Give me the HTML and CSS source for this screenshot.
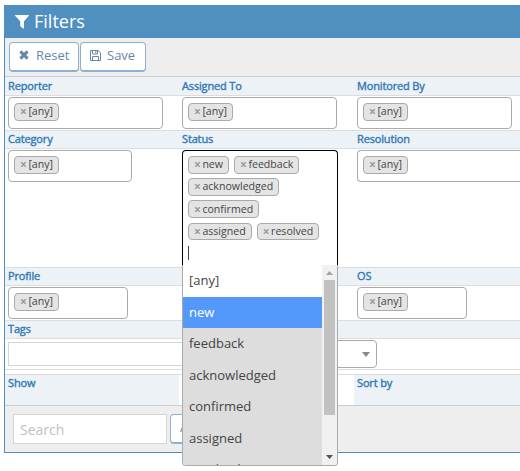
FILE: index.html
```html
<!DOCTYPE html>
<html lang="en">
<head>
<meta charset="utf-8">
<title>Filters</title>
<link rel="stylesheet" href="styles.css">
</head>
<body>
<section class="widget">
  <header class="widget-header">
    <svg class="funnel" viewBox="0 0 14 14"><path d="M0.3 0h13.4q.5.6 0 1.100L9 6.300V13.200q-.3.700-.9.200L5.200 11V6.300L.3 1.100Q-.2.500.3 0z"/></svg>
    <h4>Filters</h4>
  </header>
  <div class="toolbar">
    <a class="btn reset"><svg class="times" viewBox="0 0 10 10"><path d="M2.400.3 5 2.800 7.600.3 9.700 2.400 7.200 5 9.700 7.600 7.600 9.700 5 7.200 2.400 9.700.3 7.600 2.800 5 .3 2.400z"/></svg>Reset</a>
    <a class="btn save"><svg class="floppy" viewBox="0 0 11 11"><path d="M.5.500h7.700l2.300 2.300v7.700H.5zM2.500.500v3.500h5V.500M5.800 1v2.200M2.500 10.500v-4h6v4"/></svg>Save</a>
  </div>
  <div class="row labels"><div>Reporter</div><div>Assigned To</div><div>Monitored By</div></div>
  <div class="row fields">
    <div><div class="select w155"><span class="chip"><i>×</i>[any]</span></div></div>
    <div><div class="select w155"><span class="chip"><i>×</i>[any]</span></div></div>
    <div><div class="select w155"><span class="chip"><i>×</i>[any]</span></div></div>
  </div>
  <div class="row labels alt"><div>Category</div><div>Status</div><div>Resolution</div></div>
  <div class="row fields tall">
    <div><div class="select w124"><span class="chip"><i>×</i>[any]</span></div></div>
    <div class="status-cell">
      <div class="select open">
        <div class="chips"><span class="chip"><i>×</i>new</span><span class="chip"><i>×</i>feedback</span></div>
        <div class="chips"><span class="chip"><i>×</i>acknowledged</span></div>
        <div class="chips"><span class="chip"><i>×</i>confirmed</span></div>
        <div class="chips"><span class="chip"><i>×</i>assigned</span><span class="chip"><i>×</i>resolved</span></div>
        <span class="caret"></span>
      </div>
      <div class="dropdown">
        <ul class="options">
          <li class="any">[any]</li>
          <li class="active">new</li>
          <li>feedback</li>
          <li>acknowledged</li>
          <li>confirmed</li>
          <li>assigned</li>
          <li>resolved</li>
        </ul>
        <div class="scrollbar">
          <svg class="arrow up" viewBox="0 0 7 4"><path d="M0 4 3.500 0 7 4z"/></svg>
          <div class="thumb"></div>
          <svg class="arrow down" viewBox="0 0 7 4"><path d="M0 0h7L3.500 4z"/></svg>
        </div>
      </div>
    </div>
    <div><div class="select w200"><span class="chip"><i>×</i>[any]</span></div></div>
  </div>
  <div class="row labels alt"><div>Profile</div><div></div><div>OS</div></div>
  <div class="row fields">
    <div><div class="select w120"><span class="chip"><i>×</i>[any]</span></div></div>
    <div></div>
    <div><div class="select w110"><span class="chip"><i>×</i>[any]</span></div></div>
  </div>
  <div class="row labels alt"><div>Tags</div><div></div><div></div></div>
  <div class="tags">
    <div class="tag-input"></div>
    <div class="tag-select"><svg viewBox="0 0 8 5"><path d="M0 0h8L4 5z"/></svg></div>
  </div>
  <div class="row summary"><div>Show</div><div class="blank"></div><div>Sort by</div></div>
  <footer class="widget-footer">
    <div class="search">Search</div>
    <a class="btn apply">A</a>
  </footer>
</section>
</body>
</html>
```
FILE: styles.css
```css
* { box-sizing: border-box; }

body {
  margin: 0;
  padding: 5px 0 0 4px;
  height: 471px;
  overflow: hidden;
  background: #fff;
  color: #444;
  font-family: "Open Sans", sans-serif;
}

.widget {
  width: 516px;
  height: 448px;
  border-left: 1px solid #5090c1;
  border-bottom: 1px solid #5090c1;
}

.widget-header {
  display: flex;
  align-items: center;
  gap: 5px;
  height: 33px;
  padding-left: 10px;
  background: #5090c1;
  color: #fff;
}

.widget-header h4 {
  margin: 0;
  font-size: 18px;
  font-weight: 400;
  line-height: 24px;
  padding-bottom: 2px;
}

.funnel { width: 14px; height: 14px; fill: #fff; }

.toolbar {
  display: flex;
  gap: 1px;
  height: 39px;
  padding: 4px;
  background: #eee;
  border-bottom: 1px solid #ccc;
}

.btn {
  display: flex;
  align-items: center;
  height: 30px;
  padding-bottom: 3px;
  border: 1px solid #8cb1d3;
  border-bottom-width: 2px;
  border-radius: 4px;
  background: #fff;
  color: #6688a6;
  font-size: 13px;
  white-space: nowrap;
}

.reset { width: 70px; padding-left: 9px; gap: 7px; }
.save { width: 66px; padding-left: 9px; gap: 6px; }
.times { width: 10px; height: 10px; fill: #6688a6; }
.floppy { width: 11px; height: 11px; fill: none; stroke: #6688a6; }

.row {
  display: grid;
  grid-template-columns: 174px 175px 166px;
}

.row > div { padding-left: 3px; }

.labels {
  height: 19px;
  background: #ecf2f5;
  border-bottom: 1px solid #ddd;
}

.labels, .summary {
  color: #337ab7;
  font-size: 11px;
  font-weight: 400;
  letter-spacing: -0.15px;
  line-height: 17px;
  -webkit-text-stroke: 0.4px #337ab7;
}

.labels.alt { border-top: 1px solid #ddd; line-height: 16px; }

.fields { height: 34px; padding-top: 1px; }
.fields.tall { height: 118px; }

.select {
  height: 32px;
  padding: 5px;
  border: 1px solid #aaa;
  border-radius: 4px;
  background: #fff;
  font-size: 10.600px;
}

.w110 { width: 110px; }
.w120 { width: 120px; }
.w124 { width: 124px; }
.w155 { width: 155px; }
.w200 { width: 163px; border-right: 0; border-radius: 4px 0 0 4px; }

.chip {
  display: inline-flex;
  align-items: center;
  height: 17.500px;
  padding: 0 5px;
  border: 1px solid #aaa;
  border-radius: 4px;
  background: #e4e4e4;
  line-height: 15px;
}

.select .chip { vertical-align: top; }

.chip i {
  margin-right: 1.500px;
  color: #999;
  font-size: 12px;
  font-style: normal;
  font-weight: 700;
}

.status-cell { position: relative; }

.select.open {
  display: flex;
  flex-direction: column;
  gap: 4.700px;
  width: 156px;
  height: 117px;
  border-color: #000;
  border-bottom: 0;
  border-radius: 4px 4px 0 0;
}

.chips { display: flex; gap: 5px; }

.caret { width: 1px; height: 14px; margin-top: 1px; background: #444; }

.dropdown {
  position: absolute;
  z-index: 2;
  top: 115px;
  left: 3px;
  display: flex;
  width: 156px;
  height: 201px;
  border: 1px solid #aaa;
  border-top: 0;
  border-radius: 0 0 4px 4px;
  background: #fff;
  overflow: hidden;
}

.options {
  flex: 1;
  margin: 0;
  padding: 0;
  list-style: none;
  font-size: 13px;
}

.options li {
  height: 31.400px;
  padding-left: 6px;
  background: #ddd;
  line-height: 31.400px;
}

.options .any { height: 32px; background: #fff; }
.options .active { background: #5499fa; color: #fff; }

.scrollbar {
  display: flex;
  flex-direction: column;
  align-items: center;
  width: 15px;
  background: #f1f1f1;
}

.arrow { width: 7px; height: 4px; }
.up { margin: 6px 0 5px; fill: #a3a3a3; }
.down { margin-top: 40px; fill: #505050; }
.thumb { width: 11px; height: 135px; background: #c1c1c1; }

.tags {
  display: flex;
  height: 31px;
  padding: 1px 3px;
  border-bottom: 1px solid #ddd;
}

.tag-input {
  width: 240px;
  height: 24px;
  margin-top: 2px;
  border: 1px solid #d5d5d5;
}

.tag-select {
  display: flex;
  align-items: center;
  justify-content: flex-end;
  width: 125px;
  height: 28px;
  margin-left: 4px;
  padding-right: 6px;
  border: 1px solid #aaa;
  border-radius: 4px;
}

.tag-select svg { width: 8px; height: 5px; fill: #888; }

.summary {
  height: 32px;
  margin-top: 4px;
  border-top: 1px solid #ddd;
  border-bottom: 1px solid #ccc;
  background: #ecf2f5;
  line-height: 16px;
}

.summary .blank { background: #fff; }

.widget-footer {
  display: flex;
  gap: 3px;
  height: 46px;
  padding: 8px;
  background: #eee;
}

.search {
  width: 154px;
  height: 30px;
  padding-left: 6px;
  border: 1px solid #d5d5d5;
  background: #fff;
  color: #c0c0c0;
  font-size: 14px;
  line-height: 29px;
}

.apply { width: 96px; padding-left: 9px; }
```
